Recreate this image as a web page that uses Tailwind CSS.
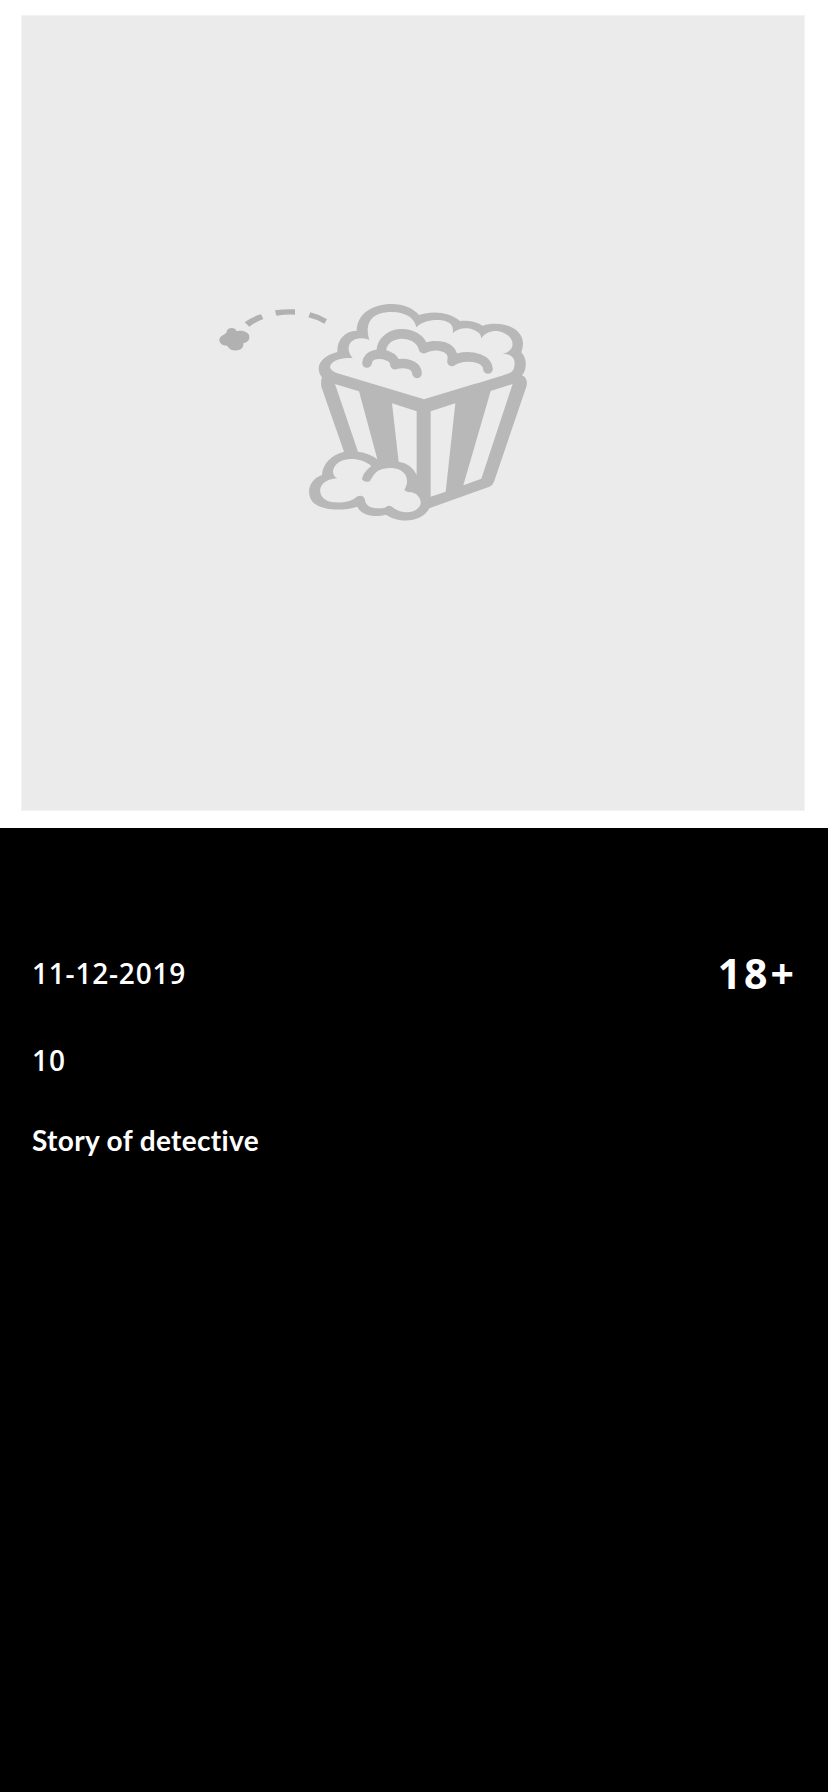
<!DOCTYPE html>
<html lang="en">
<head>
<meta charset="utf-8">
<title>Movie details</title>
<script src="https://cdn.jsdelivr.net/npm/@tailwindcss/browser@4"></script>
</head>
<body class="bg-black">
<main class="flex h-[1792px] w-[828px] flex-col overflow-hidden bg-black font-['Lato',sans-serif] text-white">
  <section class="h-[828px] bg-white pt-[15px] pl-[21px]">
    <div class="h-[796px] w-[784px] border border-[#f3f3f3] bg-[#ebebeb] pt-[274px] pl-[188px]">
      <svg class="block h-[240px] w-[330px]" viewBox="-270 0 990 720" fill="#b8b8b8">
        <!-- kernel and its trail -->
        <g fill="#b1b1b1">
          <path d="M-221 128C-219 110-194 111-190 124C-172 119-152 127-152 140C-151 153-161 157-170 160C-167 187-209 188-218 167C-230 168-242 161-242 150C-242 138-230 136-221 128Z"/>
          <path d="M-166 97Q-143 80-117 73L-110 87Q-134 96-152 110ZM-75 61Q-45 56-15 58L-15 74Q-43 73-71 77ZM31 67Q57 73 81 88L73 101Q51 88 25 82Z"/>
        </g>
        <!-- box and popcorn silhouette -->
        <path d="M66 262C48 240 50 203 112 186C111 150 132 124 170 122C171 70 220 42 275 42C310 42 340 55 357 75C395 61 448 65 480 93C505 90 530 96 548 107C602 90 668 112 669 160Q669 175 664 187C681 205 682 236 666 256C680 262 683 275 679 290L582 575Q578 586 568 590L388 655C365 700 295 700 258 674C230 682 185 680 172 650C125 665 65 660 40 638C15 610 28 567 66 555C68 520 95 494 132 485L64 290Q62 272 66 262Z"/>
        <g fill="#ebebeb">
          <path d="M90 232C92 212 125 201 158 205C135 178 145 145 185 145Q200 145 208 150C195 110 205 66 275 66C320 66 345 87 349 112C367 93 400 87 425 91C455 96 462 110 458 130C475 113 500 112 520 119C538 126 545 135 543 146C560 122 590 119 610 128C643 142 644 171 627 183Q620 189 608 192C627 191 643 200 644 218C644 235 639 244 630 248Q606 258 520 283L372 328L120 252Q92 245 90 232Z"/>
          <path d="M105 282L177 304L232 508Q210 490 174 485ZM276 340L350 364V555Q335 521 296 515ZM392 364L466 340L437 605L392 620ZM572 303L638 282L544 566L490 586Z"/>
          <path d="M112 565C91 555 96 525 125 512C155 502 190 508 214 528Q188 548 186 568Q195 580 210 573C218 560 222 550 234 542Q252 532 275 534C317 537 332 567 313 600Q320 608 332 606C360 611 368 638 358 650C340 675 299 670 277 651Q265 643 255 653C225 658 198 654 195 630Q190 612 170 620C155 635 130 638 105 637C61 635 50 600 70 580Q85 567 112 565Z"/>
        </g>
        <g fill="none" stroke="#b8b8b8" stroke-width="29" stroke-linecap="round" stroke-linejoin="round">
          <path d="M201 219C205 190 242 188 264 198Q284 206 285 224C312 216 350 222 351 250"/>
          <path d="M244 185C245 119 354 112 371 176C400 158 470 166 456 214C486 193 560 195 564 237"/>
        </g>
      </svg>
    </div>
  </section>
  <section class="flex flex-col pt-[120px] pr-[31px] pl-8 text-[28px] font-bold leading-[50px]">
    <div class="flex h-[50px] items-center justify-between font-['Open_Sans']">
      <p class="font-semibold tracking-[0.8px]">11-12-2019</p>
      <p class="text-[41px] tracking-[3px]">18+</p>
    </div>
    <p class="mt-[37px] font-['Open_Sans'] font-semibold tracking-[1px]">10</p>
    <p class="mt-[30px] tracking-[0.35px]">Story of detective</p>
  </section>
</main>
</body>
</html>
